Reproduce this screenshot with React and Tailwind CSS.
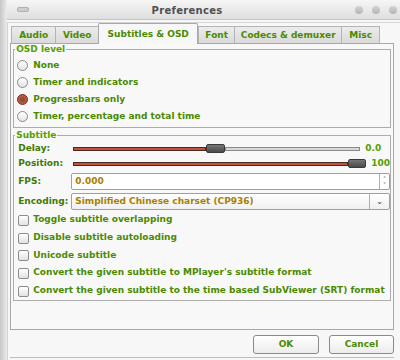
import { useState } from "react";

const TABS = [
  { label: "Audio", w: "w-[44px]" },
  { label: "Video", w: "w-[43px]" },
  { label: "Subtitles & OSD", w: "w-[100px]", active: true },
  { label: "Font", w: "w-[36px]" },
  { label: "Codecs & demuxer", w: "w-[107px]" },
  { label: "Misc", w: "w-[39px]" },
];

const OSD = ["None", "Timer and indicators", "Progressbars only", "Timer, percentage and total time"];

const CHECKS = [
  ["Toggle subtitle overlapping", "h-[18px]"],
  ["Disable subtitle autoloading", "h-[18px]"],
  ["Unicode subtitle", "h-[17px]"],
  ["Convert the given subtitle to MPlayer's subtitle format", "h-[18px]"],
  ["Convert the given subtitle to the time based SubViewer (SRT) format", "h-[18px]"],
];

function TitleBar() {
  return (
    <div className="flex h-[20px] items-center border-b border-[#c4c4c4] bg-gradient-to-b from-[#f6f6f6] to-[#dedede]">
      <div className="ml-[10px] h-[5px] w-[12px] rounded-[2px] border border-[#b0b0b0] bg-[#cdcdcd]" />
      <div className="flex-1 pr-[10px] pt-[1px] text-center text-[10px] font-bold tracking-[0.3px] text-[#505050]">Preferences</div>
      <div className="mr-[3px] flex gap-[9px]">
        <span className="h-[8px] w-[8px] rounded-full bg-gradient-to-b from-[#d4d4d4] to-[#b4b4b4]" />
        <span className="h-[8px] w-[8px] rounded-full bg-gradient-to-b from-[#d4d4d4] to-[#b4b4b4]" />
        <span className="h-[8px] w-[8px] rounded-full bg-gradient-to-b from-[#d4d4d4] to-[#b4b4b4]" />
      </div>
    </div>
  );
}

function Radio({ on }) {
  if (on) {
    return (
      <span className="flex h-[11px] w-[11px] items-center justify-center rounded-full border border-[#7a3024] bg-[#bf5442]">
        <span className="h-[5px] w-[5px] rounded-full bg-[#7d5a36]" />
      </span>
    );
  }
  return <span className="h-[11px] w-[11px] rounded-full border border-[#8a8a8a] bg-gradient-to-b from-[#ffffff] to-[#e4e4e4]" />;
}

function Slider({ red, gray, handle }) {
  return (
    <div className="flex h-[10px] items-center">
      <div className="h-[4px] border border-[#4a2a22] bg-[#c4503e]" style={{ width: red }} />
      <div className="h-[9px] rounded-[2px] border border-[#3a3a3a] bg-gradient-to-b from-[#777] to-[#4a4a4a]" style={{ width: handle }} />
      {gray > 0 && <div className="h-[4px] border border-[#8a8a8a] bg-[#d8d8d8]" style={{ width: gray }} />}
    </div>
  );
}

export default function App() {
  const [osd, setOsd] = useState(2);
  const [checks, setChecks] = useState([false, false, false, false, false]);

  return (
    <div
      className="flex h-[360px] w-[400px] overflow-hidden bg-[#f7f7f7] text-[9px] font-bold text-[#4b8a00]"
      style={{ fontFamily: '"DejaVu Sans", sans-serif' }}
    >
      <div className="w-[9px] bg-gradient-to-r from-[#c6c6c6] to-[#ececec]" />
      <div className="flex flex-1 flex-col">
        <TitleBar />
        <div className="mt-[2px] flex flex-1 flex-col border-l border-t border-[#d4d4d4] pl-[2px] pr-[6px]">
          {/* tabs */}
          <div className="ml-[1px] flex h-[20px] items-end">
            {TABS.map((t) =>
              t.active ? (
                <div
                  key={t.label}
                  className={`${t.w} relative z-10 -mb-px flex h-[21px] items-center justify-center rounded-t-[2px] border border-b-0 border-[#a8a8a8] bg-[#f7f7f7] pt-[1px] text-[#4b8a00]`}
                >
                  {t.label}
                </div>
              ) : (
                <div
                  key={t.label}
                  className={`${t.w} flex h-[17px] items-center justify-center border-l border-t border-[#b4b4b4] bg-gradient-to-b from-[#ececec] to-[#dadada] pt-[1px] text-[#4b8a00] last:border-r`}
                >
                  {t.label}
                </div>
              )
            )}
          </div>

          {/* panel */}
          <div className="flex h-[287px] flex-col border border-[#a8a8a8] bg-[#f8f8f8] px-[2px]">
            <fieldset className="border border-[#acacac] pb-[2px] pt-[2px]">
              <legend className="ml-[1px] px-[1px] leading-[11px] text-[#55a000]">OSD level</legend>
              {OSD.map((label, i) => (
                <div key={label} className="flex h-[17px] cursor-default items-center gap-[5px] pl-[3px]" onClick={() => setOsd(i)}>
                  <Radio on={osd === i} />
                  <span>{label}</span>
                </div>
              ))}
            </fieldset>

            <fieldset className="mt-[2px] border border-[#acacac]">
              <legend className="ml-[1px] px-[1px] leading-[11px] text-[#55a000]">Subtitle</legend>
              <div className="flex h-[15px] items-center pl-[4px]">
                <span className="w-[55px] text-[#3f7a00]">Delay:</span>
                <Slider red={133} handle={19} gray={135} />
                <span className="ml-[5px] text-[#55a000]">0.0</span>
              </div>
              <div className="flex h-[15px] items-center pl-[4px]">
                <span className="w-[55px] text-[#3f7a00]">Position:</span>
                <Slider red={275} handle={18} gray={0} />
                <span className="ml-[5px] text-[#55a000]">100</span>
              </div>
              <div className="mt-[2px] flex h-[17px] items-center pl-[4px]">
                <span className="w-[53px] text-[#3f7a00]">FPS:</span>
                <div className="flex h-[17px] flex-1 items-center rounded-[2px] border border-[#a0a0a0] bg-white pl-[3px] text-[#a88000]">
                  <span className="flex-1">0.000</span>
                  <span className="flex h-full w-[10px] flex-col items-center justify-center border-l border-[#b0b0b0] text-[6px] leading-[6px] text-[#666]">
                    <span>˄</span>
                    <span>˅</span>
                  </span>
                </div>
              </div>
              <div className="mt-[3px] flex h-[17px] items-center pl-[4px]">
                <span className="w-[53px] text-[#3f7a00]">Encoding:</span>
                <div className="flex h-[17px] flex-1 items-center rounded-[2px] border border-[#a0a0a0] bg-gradient-to-b from-[#ffffff] to-[#f0f0f0] pl-[3px] text-[#a88000]">
                  <span className="flex-1">Simplified Chinese charset (CP936)</span>
                  <span className="flex h-full w-[20px] items-center justify-center border-l border-[#b0b0b0] text-[8px] text-[#555]">⌄</span>
                </div>
              </div>
              <div className="mt-[1px]">
                {CHECKS.map(([label, h], i) => (
                  <div
                    key={label}
                    className={`${h} flex cursor-default items-center gap-[4px] pl-[4px]`}
                    onClick={() => setChecks(checks.map((c, j) => (j === i ? !c : c)))}
                  >
                    <span className="flex h-[11px] w-[11px] items-center justify-center rounded-[2px] border border-[#8c8c8c] bg-gradient-to-b from-[#ffffff] to-[#e2e2e2] text-[8px] text-[#444]">
                      {checks[i] ? "✓" : ""}
                    </span>
                    <span>{label}</span>
                  </div>
                ))}
              </div>
            </fieldset>
          </div>

          {/* buttons */}
          <div className="mt-[5px] flex justify-end gap-[10px]">
            <button className="h-[19px] w-[66px] rounded-[3px] border border-[#8a8a8a] bg-gradient-to-b from-[#ffffff] to-[#ececec] text-[9px] font-bold text-[#4b8a00]">
              OK
            </button>
            <button className="h-[19px] w-[65px] rounded-[3px] border border-[#8a8a8a] bg-gradient-to-b from-[#ffffff] to-[#ececec] text-[9px] font-bold text-[#4b8a00]">
              Cancel
            </button>
          </div>
          <div className="mt-[3px] border-t border-[#bdbdbd]" />
        </div>
      </div>
    </div>
  );
}
